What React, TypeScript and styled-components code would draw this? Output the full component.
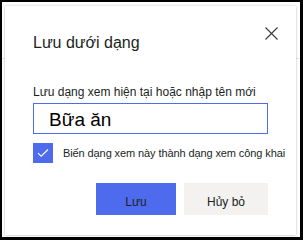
import React from 'react'
import styled, { createGlobalStyle } from 'styled-components'

const GlobalStyle = createGlobalStyle`
	html, body {
		margin: 0;
		padding: 0;
		background: #ffffff;
	}
	body {
		font-family: 'Liberation Sans', Arial, sans-serif;
		color: #201f1e;
	}
`

const blue = '#4f6bed'

const Frame = styled.div`
	position: relative;
	box-sizing: border-box;
	width: 303px;
	height: 240px;
	overflow: hidden;
	background: #ffffff;
	border-style: solid;
	border-color: #000000;
	border-width: 2px 3px 3px 2px;
`

const PageBar = styled.div`
	height: 56px;
	border-bottom: 1px solid #e6e6e6;
`

const Dialog = styled.div`
	position: absolute;
	left: 3px;
	top: 4px;
	width: 291px;
	height: 229px;
	box-sizing: border-box;
	background: #ffffff;
	box-shadow: 0 0 2px rgba(0, 0, 0, 0.22), 0 1px 3px rgba(0, 0, 0, 0.08);
	display: flex;
	flex-direction: column;
	padding: 0 28px;
`

const Header = styled.div`
	height: 47px;
	box-sizing: border-box;
	padding-top: 26px;
	display: flex;
	justify-content: space-between;
	align-items: flex-start;
`

const Title = styled.h2`
	margin: 0;
	font-size: 16px;
	line-height: 22px;
	font-weight: 400;
	color: #201f1e;
`

const CloseButton = styled.button`
	border: none;
	background: none;
	padding: 0;
	margin: -5px -10px 0 0;
	width: 13px;
	height: 13px;
	cursor: pointer;
	display: flex;
	svg {
		display: block;
	}
`

const FieldLabel = styled.label`
	display: block;
	margin-top: 30px;
	font-size: 12px;
	line-height: 18px;
	color: #201f1e;
	white-space: nowrap;
`

const NameInput = styled.input`
	display: block;
	box-sizing: border-box;
	width: 100%;
	height: 31px;
	margin-top: 2px;
	border: 1px solid ${blue};
	border-radius: 0;
	outline: none;
	padding: 2px 10px 0 15px;
	font-family: 'Liberation Sans', Arial, sans-serif;
	font-size: 19px;
	color: #000000;
	background: #ffffff;
`

const CheckRow = styled.label`
	display: flex;
	align-items: center;
	gap: 10px;
	margin-top: 9px;
	font-size: 11px;
	letter-spacing: -0.1px;
	line-height: 18px;
	color: #201f1e;
	white-space: nowrap;
`

const CheckBox = styled.span<{ checked: boolean }>`
	width: 20px;
	height: 20px;
	flex: none;
	display: flex;
	align-items: center;
	justify-content: center;
	background: ${(p) => (p.checked ? blue : '#ffffff')};
	border: ${(p) => (p.checked ? 'none' : '1px solid #323130')};
`

const Footer = styled.div`
	display: flex;
	justify-content: flex-end;
	gap: 8px;
	margin-top: 20px;
`

const Button = styled.button<{ primary?: boolean; width: number }>`
	width: ${(p) => p.width}px;
	height: 32px;
	border: none;
	border-radius: 0;
	padding: 6px 0 0;
	font-family: 'Liberation Sans', Arial, sans-serif;
	font-size: 12px;
	color: #201f1e;
	background: ${(p) => (p.primary ? blue : '#f3f2f1')};
	cursor: pointer;
`

export default function App() {
	return (
		<>
			<GlobalStyle />
			<Frame>
				<PageBar />
				<Dialog>
					<Header>
						<Title>Lưu dưới dạng</Title>
						<CloseButton aria-label="Đóng">
							<svg width="13" height="13" viewBox="0 0 13 13">
								<path d="M0.5 0.5 L12.5 12.5 M12.5 0.5 L0.5 12.5" stroke="#3b3a39" strokeWidth="1.1" fill="none" />
							</svg>
						</CloseButton>
					</Header>
					<FieldLabel htmlFor="view-name">Lưu dạng xem hiện tại hoặc nhập tên mới</FieldLabel>
					<NameInput id="view-name" defaultValue="Bữa ăn" />
					<CheckRow>
						<CheckBox checked>
							<svg width="12" height="10" viewBox="0 0 12 10">
								<path d="M1 5.2 L4.2 8.2 L11 1.5" stroke="#ffffff" strokeWidth="1.1" fill="none" />
							</svg>
						</CheckBox>
						Biến dạng xem này thành dạng xem công khai
					</CheckRow>
					<Footer>
						<Button primary width={80}>Lưu</Button>
						<Button width={84}>Hủy bỏ</Button>
					</Footer>
				</Dialog>
			</Frame>
		</>
	)
}
